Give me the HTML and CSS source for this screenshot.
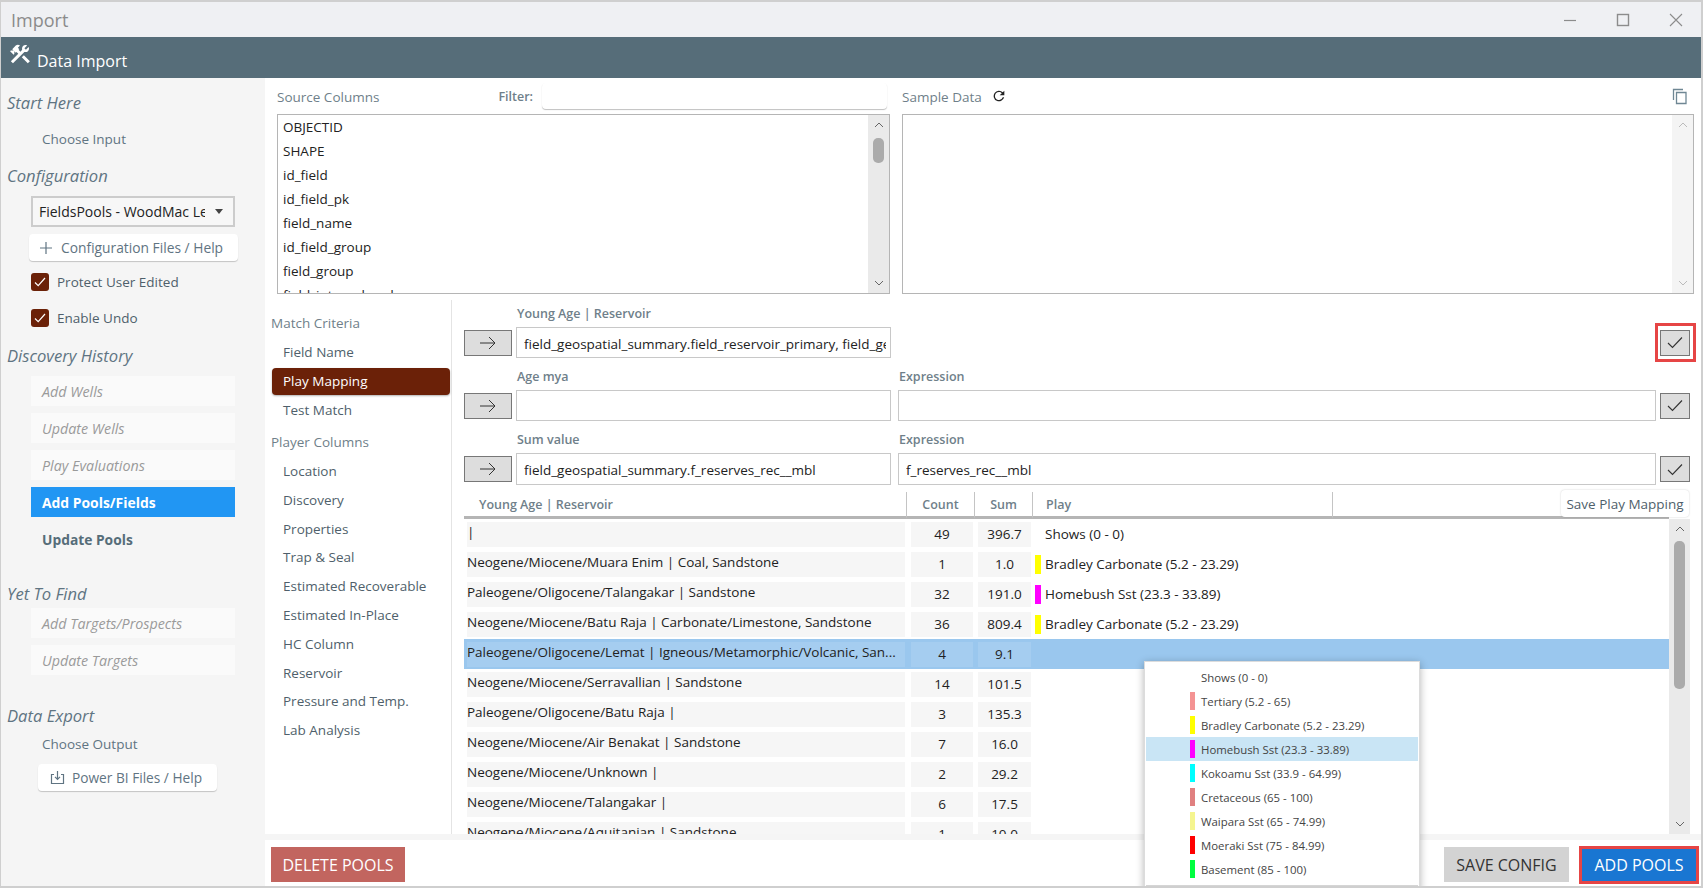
FILE: index.html
```html
<!DOCTYPE html>
<html lang="en">
<head>
<meta charset="utf-8">
<title>Import</title>
<link rel="stylesheet" href="styles.css">
</head>
<body>
<div class="window">
  <div class="titlebar">
    <span class="title">Import</span>
    <div class="winctl">
      <svg width="14" height="14" viewBox="0 0 14 14"><path d="M1 7.5h12" stroke="#8c8c8c" stroke-width="1.2"/></svg>
      <svg width="14" height="14" viewBox="0 0 14 14"><rect x="1.5" y="1.5" width="11" height="11" fill="none" stroke="#8c8c8c" stroke-width="1.4"/></svg>
      <svg width="14" height="14" viewBox="0 0 14 14"><path d="M1 1l12 12M13 1L1 13" stroke="#8c8c8c" stroke-width="1.1"/></svg>
    </div>
  </div>
  <div class="header">
    <svg class="tools" width="24" height="24" viewBox="0 0 24 24"><path fill="#fff" d="M13.78 15.3L19.78 21.3L21.89 19.14L15.89 13.14L13.78 15.3M17.5 10.1C17.11 10.1 16.69 10.05 16.36 9.91L4.97 21.25L2.86 19.14L10.27 11.74L8.5 9.96L7.78 10.66L6.33 9.25V12.11L5.63 12.81L2.11 9.25L2.81 8.55H5.62L4.22 7.14L7.78 3.58C8.95 2.41 10.83 2.41 12 3.58L9.89 5.74L11.3 7.14L10.59 7.85L12.38 9.63L14.2 7.75C14.06 7.42 14 7 14 6.63C14 4.66 15.56 3.11 17.5 3.11C18.09 3.11 18.61 3.25 19.08 3.53L16.41 6.2L17.91 7.7L20.58 5.03C20.86 5.5 21 6 21 6.63C21 8.55 19.45 10.1 17.5 10.1Z"/></svg>
    <span>Data Import</span>
  </div>
  <div class="body">
    <aside class="sidebar">
      <h3 class="sec sec-start">Start Here</h3>
      <div class="plain plain-input">Choose Input</div>
      <h3 class="sec sec-config">Configuration</h3>
      <div class="select"><span class="select-text">FieldsPools - WoodMac Legacy</span><i class="caret"></i></div>
      <div class="pill pill-config">
        <svg width="14" height="14" viewBox="0 0 14 14"><path d="M7 1v12M1 7h12" stroke="#5f7482" stroke-width="1.2"/></svg>
        <span>Configuration Files / Help</span>
      </div>
      <label class="check check-first"><span class="box"><svg width="14" height="14" viewBox="0 0 14 14"><path d="M2 7.5l3.2 3.2L12 3" fill="none" stroke="#fff" stroke-width="1.2"/></svg></span>Protect User Edited</label>
      <label class="check check-second"><span class="box"><svg width="14" height="14" viewBox="0 0 14 14"><path d="M2 7.5l3.2 3.2L12 3" fill="none" stroke="#fff" stroke-width="1.2"/></svg></span>Enable Undo</label>
      <h3 class="sec sec-history">Discovery History</h3>
      <div class="step off">Add Wells</div>
      <div class="step off">Update Wells</div>
      <div class="step off">Play Evaluations</div>
      <div class="step active">Add Pools/Fields</div>
      <div class="step bold">Update Pools</div>
      <h3 class="sec sec-find">Yet To Find</h3>
      <div class="step off">Add Targets/Prospects</div>
      <div class="step off">Update Targets</div>
      <h3 class="sec sec-export">Data Export</h3>
      <div class="plain plain-output">Choose Output</div>
      <div class="pill pill-power">
        <svg width="15" height="15" viewBox="0 0 15 15"><path d="M4 4.5H1.5v9h12v-9H11M7.5 1v8M5 6.8l2.5 2.5L10 6.8" fill="none" stroke="#5f7482" stroke-width="1.2"/></svg>
        <span>Power BI Files / Help</span>
      </div>
    </aside>
    <main class="main">
      <section class="top">
        <div class="source">
          <div class="source-head">
            <span class="cap">Source Columns</span>
            <span class="filter-label">Filter:</span>
            <div class="filter"></div>
          </div>
          <div class="listbox">
            <ul class="items">
              <li>OBJECTID</li><li>SHAPE</li><li>id_field</li><li>id_field_pk</li><li>field_name</li><li>id_field_group</li><li>field_group</li><li>field_internal_code</li>
            </ul>
            <div class="vbar">
              <svg class="chev" width="10" height="6" viewBox="0 0 10 6"><path d="M1 5l4-4 4 4" fill="none" stroke="#666" stroke-width="1"/></svg>
              <div class="thumb thumb-src"></div>
              <svg class="chev chev-end" width="10" height="6" viewBox="0 0 10 6"><path d="M1 1l4 4 4-4" fill="none" stroke="#666" stroke-width="1"/></svg>
            </div>
          </div>
        </div>
        <div class="sample">
          <div class="sample-head">
            <span class="cap">Sample Data</span>
            <svg class="refresh" width="16" height="16" viewBox="0 0 24 24"><path fill="#222" d="M17.65 6.35A8 8 0 1 0 19.73 14h-2.08A6 6 0 1 1 12 6c1.66 0 3.14.69 4.22 1.78L13 11h7V4z"/></svg>
            <svg class="copy" width="16" height="17" viewBox="0 0 16 17"><path d="M1.5 12V1.5H11M4.5 4.5h9.5v11H4.5z" fill="none" stroke="#6f8794" stroke-width="1.3"/></svg>
          </div>
          <div class="samplebox">
            <div class="vbar vbar-pale">
              <svg class="chev" width="10" height="6" viewBox="0 0 10 6"><path d="M1 5l4-4 4 4" fill="none" stroke="#bbb" stroke-width="1"/></svg>
              <svg class="chev chev-end" width="10" height="6" viewBox="0 0 10 6"><path d="M1 1l4 4 4-4" fill="none" stroke="#bbb" stroke-width="1"/></svg>
            </div>
          </div>
        </div>
      </section>
      <section class="mid">
        <nav class="subnav">
          <div class="navhead navhead-first">Match Criteria</div>
          <div class="navitem">Field Name</div>
          <div class="navitem current">Play Mapping</div>
          <div class="navitem">Test Match</div>
          <div class="navhead navhead-second">Player Columns</div>
          <div class="navitem">Location</div>
          <div class="navitem">Discovery</div>
          <div class="navitem">Properties</div>
          <div class="navitem">Trap &amp; Seal</div>
          <div class="navitem">Estimated Recoverable</div>
          <div class="navitem">Estimated In-Place</div>
          <div class="navitem">HC Column</div>
          <div class="navitem">Reservoir</div>
          <div class="navitem">Pressure and Temp.</div>
          <div class="navitem">Lab Analysis</div>
        </nav>
        <div class="mapping">
          <div class="labels labels-first"><span class="lab lab-a">Young Age | Reservoir</span></div>
          <div class="maprow">
            <button class="sq arrow"><svg width="18" height="14" viewBox="0 0 18 14"><path d="M1 7h15M10 1l6 6-6 6" fill="none" stroke="#333" stroke-width="1"/></svg></button>
            <div class="field field-a"><span class="clip">field_geospatial_summary.field_reservoir_primary, field_geospatial_summary.field_age</span></div>
            <div class="nofield"></div>
            <div class="hilite"><button class="sq tick"><svg width="16" height="13" viewBox="0 0 16 13"><path d="M1 7l4.5 4.5L15 1.5" fill="none" stroke="#333" stroke-width="1.1"/></svg></button></div>
          </div>
          <div class="labels"><span class="lab lab-a">Age mya</span><span class="lab">Expression</span></div>
          <div class="maprow">
            <button class="sq arrow"><svg width="18" height="14" viewBox="0 0 18 14"><path d="M1 7h15M10 1l6 6-6 6" fill="none" stroke="#333" stroke-width="1"/></svg></button>
            <div class="field field-a"></div>
            <div class="field field-b"></div>
            <button class="sq tick"><svg width="16" height="13" viewBox="0 0 16 13"><path d="M1 7l4.5 4.5L15 1.5" fill="none" stroke="#333" stroke-width="1.1"/></svg></button>
          </div>
          <div class="labels"><span class="lab lab-a">Sum value</span><span class="lab">Expression</span></div>
          <div class="maprow maprow-tall">
            <button class="sq arrow"><svg width="18" height="14" viewBox="0 0 18 14"><path d="M1 7h15M10 1l6 6-6 6" fill="none" stroke="#333" stroke-width="1"/></svg></button>
            <div class="field field-a"><span class="clip">field_geospatial_summary.f_reserves_rec__mbl</span></div>
            <div class="field field-b"><span class="clip">f_reserves_rec__mbl</span></div>
            <button class="sq tick"><svg width="16" height="13" viewBox="0 0 16 13"><path d="M1 7l4.5 4.5L15 1.5" fill="none" stroke="#333" stroke-width="1.1"/></svg></button>
          </div>
          <div class="thead">
            <div class="th th-name">Young Age | Reservoir</div>
            <div class="th th-count">Count</div>
            <div class="th th-sum">Sum</div>
            <div class="th th-play">Play</div>
            <div class="savemap">Save Play Mapping</div>
          </div>
          <div class="tbody">
            <div class="rows">
              <div class="row"><div class="c-name">|</div><div class="c-num">49</div><div class="c-sum">396.7</div><div class="c-play">Shows (0 - 0)</div></div>
              <div class="row"><div class="c-name">Neogene/Miocene/Muara Enim | Coal, Sandstone</div><div class="c-num">1</div><div class="c-sum">1.0</div><div class="c-play"><i class="sw sw-y"></i>Bradley Carbonate (5.2 - 23.29)</div></div>
              <div class="row"><div class="c-name">Paleogene/Oligocene/Talangakar | Sandstone</div><div class="c-num">32</div><div class="c-sum">191.0</div><div class="c-play"><i class="sw sw-m"></i>Homebush Sst (23.3 - 33.89)</div></div>
              <div class="row"><div class="c-name">Neogene/Miocene/Batu Raja | Carbonate/Limestone, Sandstone</div><div class="c-num">36</div><div class="c-sum">809.4</div><div class="c-play"><i class="sw sw-y"></i>Bradley Carbonate (5.2 - 23.29)</div></div>
              <div class="row selected"><div class="c-name">Paleogene/Oligocene/Lemat | Igneous/Metamorphic/Volcanic, San...</div><div class="c-num">4</div><div class="c-sum">9.1</div><div class="c-play"></div></div>
              <div class="row"><div class="c-name">Neogene/Miocene/Serravallian | Sandstone</div><div class="c-num">14</div><div class="c-sum">101.5</div><div class="c-play"></div></div>
              <div class="row"><div class="c-name">Paleogene/Oligocene/Batu Raja |</div><div class="c-num">3</div><div class="c-sum">135.3</div><div class="c-play"></div></div>
              <div class="row"><div class="c-name">Neogene/Miocene/Air Benakat | Sandstone</div><div class="c-num">7</div><div class="c-sum">16.0</div><div class="c-play"></div></div>
              <div class="row"><div class="c-name">Neogene/Miocene/Unknown |</div><div class="c-num">2</div><div class="c-sum">29.2</div><div class="c-play"></div></div>
              <div class="row"><div class="c-name">Neogene/Miocene/Talangakar |</div><div class="c-num">6</div><div class="c-sum">17.5</div><div class="c-play"></div></div>
              <div class="row"><div class="c-name">Neogene/Miocene/Aquitanian | Sandstone</div><div class="c-num">1</div><div class="c-sum">10.0</div><div class="c-play"></div></div>
            </div>
            <div class="vbar vbar-table">
              <svg class="chev" width="10" height="6" viewBox="0 0 10 6"><path d="M1 5l4-4 4 4" fill="none" stroke="#666" stroke-width="1"/></svg>
              <div class="thumb thumb-table"></div>
              <svg class="chev chev-end" width="10" height="6" viewBox="0 0 10 6"><path d="M1 1l4 4 4-4" fill="none" stroke="#666" stroke-width="1"/></svg>
            </div>
          </div>
        </div>
      </section>
      <footer class="footer">
        <button class="act delete">DELETE POOLS</button>
        <div class="spacer"></div>
        <button class="act save">SAVE CONFIG</button>
        <div class="addwrap"><button class="act add">ADD POOLS</button></div>
      </footer>
    </main>
  </div>
  <div class="menu">
    <div class="mi"><i class="msw"></i>Shows (0 - 0)</div>
    <div class="mi"><i class="msw m1"></i>Tertiary (5.2 - 65)</div>
    <div class="mi"><i class="msw m2"></i>Bradley Carbonate (5.2 - 23.29)</div>
    <div class="mi hot"><i class="msw m3"></i>Homebush Sst (23.3 - 33.89)</div>
    <div class="mi"><i class="msw m4"></i>Kokoamu Sst (33.9 - 64.99)</div>
    <div class="mi"><i class="msw m5"></i>Cretaceous (65 - 100)</div>
    <div class="mi"><i class="msw m6"></i>Waipara Sst (65 - 74.99)</div>
    <div class="mi"><i class="msw m7"></i>Moeraki Sst (75 - 84.99)</div>
    <div class="mi"><i class="msw m8"></i>Basement (85 - 100)</div>
    <div class="msep"></div>
  </div>
</div>
</body>
</html>
```
FILE: styles.css
```css
*, *::before, *::after { box-sizing: border-box; }
html, body { margin: 0; padding: 0; height: 100%; overflow: hidden; }
body { font-family: "Open Sans", "Noto Sans", sans-serif; font-size: 13.5px; color: #222; background: #fff; }
h3 { margin: 0; font-weight: 400; }
ul { list-style: none; margin: 0; padding: 0; }
button { font-family: inherit; cursor: default; }

.window { position: relative; width: 1703px; height: 888px; border: 2px solid #cfcfcf; border-left-width: 1px; border-right-width: 2px; display: flex; flex-direction: column; overflow: hidden; background: #fff; }
.titlebar { height: 35px; flex: none; background: #eff0f3; display: flex; align-items: center; justify-content: space-between; padding: 0 18px 0 10px; }
.title { font-size: 18px; color: #8b8b8b; }
.winctl { display: flex; gap: 39px; align-items: center; }
.header { height: 41px; flex: none; background: #566d79; color: #fff; display: flex; align-items: center; font-size: 16px; padding: 0 0 0 7px; gap: 5px; }
.tools { margin-top: -7px; }
.header span { padding-top: 7px; }
.body { flex: 1; min-height: 0; display: flex; }

.sidebar { width: 264px; flex: none; background: #f5f5f5; padding: 0 0 0 6px; color: #5f7482; }
.sec { font-style: italic; font-size: 16.6px; color: #5f7482; line-height: 24px; }
.sec-start { margin-top: 13px; }
.sec-config { margin-top: 15px; }
.sec-history { margin-top: 16px; }
.sec-find { margin-top: 21px; }
.sec-export { margin-top: 29px; }
.plain { font-size: 13.5px; line-height: 20px; padding-left: 35px; }
.plain-input { margin-top: 14px; }
.plain-output { margin-top: 6px; }
.select { width: 204px; height: 31px; margin: 8px 0 0 24px; border: 2px solid #ccc; background: #f7f7f7; display: flex; align-items: center; padding: 0 10px 0 6px; gap: 10px; color: #222; font-size: 14px; }
.select-text { flex: 1; overflow: hidden; white-space: nowrap; }
.caret { width: 0; height: 0; border-left: 4px solid transparent; border-right: 4px solid transparent; border-top: 5px solid #444; }
.pill { background: #fff; border-radius: 4px; box-shadow: 0 1px 1px rgba(0,0,0,.2); display: flex; align-items: center; color: #5f7482; }
.pill-config { width: 209px; height: 27px; margin: 7px 0 0 22px; padding-left: 10px; gap: 8px; font-size: 13.8px; }
.pill-power { width: 179px; height: 27px; margin: 10px 0 0 31px; padding-left: 12px; gap: 7px; font-size: 13.7px; }
.check { display: flex; align-items: center; gap: 8px; margin-left: 24px; height: 20px; color: #4f5f6b; font-size: 13.5px; }
.check-first { margin-top: 11px; }
.check-second { margin-top: 16px; }
.box { width: 18px; height: 18px; border-radius: 3px; background: #6b2108; display: flex; align-items: center; justify-content: center; }
.step { width: 204px; height: 30px; margin: 0 0 7px 24px; padding-left: 11px; display: flex; align-items: center; font-size: 14.3px; }
.sec-history + .step { margin-top: 8px; }
.sec-find + .step { margin-top: 2px; }
.off { background: #fafafa; font-style: italic; color: #9a9a9a; }
.active { background: #2196f3; color: #fff; font-weight: 700; font-size: 13.9px; }
.bold { font-weight: 700; color: #566d79; margin-bottom: 0; margin-top: -7px; height: 44px; font-size: 13.8px; }

.main { flex: 1; min-width: 0; display: flex; flex-direction: column; background: #fff; }
.top { height: 222px; flex: none; display: flex; padding: 5px 7px 0 12px; gap: 12px; }
.source { width: 613px; flex: none; }
.source-head { height: 26px; display: flex; align-items: center; }
.cap { color: #6f7f8a; font-size: 13.5px; padding-top: 2px; }
.filter-label { margin-left: 119px; font-size: 12.5px; font-weight: 600; color: #6f7f8a; }
.filter { margin-left: 9px; width: 345px; height: 26px; border-radius: 4px; box-shadow: 0 1px 1px rgba(0,0,0,.25); background: #fff; }
.listbox { margin-top: 5px; height: 180px; border: 1px solid #b5b5b5; display: flex; overflow: hidden; }
.items { flex: 1; padding: 0 0 0 5px; color: #222; font-size: 13.5px; }
.items li { height: 24px; line-height: 24px; white-space: nowrap; }
.vbar { background: #eaeaea; width: 21px; flex: none; display: flex; flex-direction: column; align-items: center; padding: 7px 0; position: relative; }
.chev { flex: none; }
.chev-end { margin-top: auto; }
.thumb { background: #ababab; border-radius: 5px; width: 11px; }
.thumb-src { height: 25px; margin-top: 10px; }
.vbar-pale { background: #f4f4f4; margin-left: auto; }
.sample { flex: 1; min-width: 0; display: flex; flex-direction: column; }
.sample-head { height: 26px; display: flex; align-items: center; }
.refresh { margin-left: 9px; }
.copy { margin-left: auto; margin-right: 6px; }
.samplebox { margin-top: 5px; height: 180px; border: 1px solid #b5b5b5; display: flex; }

.mid { flex: 1; min-height: 0; display: flex; }
.subnav { width: 187px; flex: none; border-right: 1px solid #e4e4e4; padding: 0 1px 0 6px; }
.navhead { color: #6f7f8a; height: 29px; display: flex; align-items: center; font-size: 13.5px; }
.navhead-first { margin-top: 8px; }
.navhead-first + .navitem { margin-top: 1px; }
.navhead-second { margin-top: 2px; height: 30px; }
.navitem { height: 28.8px; display: flex; align-items: center; margin-left: 1px; padding-left: 11px; color: #4f5f6b; font-size: 13.5px; border-radius: 4px; }
.current { background: #6b2108; color: #fff; height: 27px; margin: 1px 0 1px 1px; box-shadow: 0 1px 2px rgba(0,0,0,.3); }
.mapping { flex: 1; min-width: 0; padding-left: 12px; display: flex; flex-direction: column; }
.labels { height: 32px; padding-top: 4px; display: flex; align-items: center; font-size: 12.5px; font-weight: 600; color: #6f7f8a; flex: none; }
.labels-first { height: 27px; padding-top: 0; }
.lab-a { width: 435px; padding-left: 53px; }
.maprow { height: 31px; display: flex; align-items: center; flex: none; }
.maprow-tall { height: 32px; }
.sq { width: 48px; height: 26px; background: #ddd; border: 1px solid #777; padding: 0; display: flex; align-items: center; justify-content: center; flex: none; }
.field { height: 100%; border: 1px solid #c8c8c8; display: flex; align-items: center; padding: 2px 4px 0 7px; font-size: 13.5px; color: #222; flex: none; }
.clip { overflow: hidden; white-space: nowrap; }
.field-a { width: 375px; margin-left: 4px; }
.field-b { width: 758px; margin-left: 7px; }
.nofield { width: 765px; flex: none; }
.tick { width: 30px; margin-left: 4px; }
.hilite { position: relative; display: flex; }
.hilite::after { content: ""; position: absolute; left: -1px; top: -7px; width: 41px; height: 39px; border: 3px solid #e64545; pointer-events: none; }
.thead { height: 34px; flex: none; display: flex; align-items: flex-end; width: 1205px; position: relative; }
.th { height: 27px; border-bottom: 3px solid #b5b5b5; font-size: 12.5px; font-weight: 600; color: #6f7f8a; display: flex; align-items: center; border-right: 1px solid #c4c4c4; }
.th-name { width: 443px; padding-left: 15px; }
.th-count { width: 68px; justify-content: center; }
.th-sum { width: 58px; justify-content: center; }
.th-play { width: 300px; padding-left: 13px; }
.thead::after { content: ""; flex: 1; height: 3px; background: #b5b5b5; }
.savemap { position: absolute; right: -20px; bottom: 2px; width: 128px; height: 27px; background: #fff; border-radius: 4px; box-shadow: 0 0 2px rgba(0,0,0,.2); display: flex; align-items: center; justify-content: center; color: #4f5f6b; font-size: 13.5px; }
.tbody { flex: 1; min-height: 0; display: flex; margin-right: 11px; }
.rows { width: 1205px; flex: none; overflow: hidden; }
.row { height: 30px; display: flex; align-items: center; padding-left: 3px; color: #222; font-size: 13.5px; }
.c-name { width: 438px; height: 25px; background: #f6f6f6; padding: 0 0 5px 0; white-space: nowrap; overflow: hidden; display: flex; align-items: center; flex: none; }
.c-num { width: 62px; height: 25px; background: #f6f6f6; margin-left: 6px; display: flex; align-items: center; justify-content: center; flex: none; }
.c-sum { width: 53px; height: 25px; background: #f6f6f6; margin-left: 5px; display: flex; align-items: center; justify-content: center; flex: none; }
.c-play { margin-left: 4px; display: flex; align-items: center; gap: 4px; height: 25px; white-space: nowrap; padding-left: 10px; }
.c-play .sw { margin-left: -10px; }
.sw { width: 6px; height: 19px; display: block; }
.sw-y { background: #ffff00; }
.sw-m { background: #ff00ff; }
.selected { background: #9ac7ee; }
.selected .c-name, .selected .c-num, .selected .c-sum { background: #a5cdf0; }
.vbar-table { width: 21px; }
.thumb-table { height: 148px; margin-top: 9px; }

.footer { height: 52px; flex: none; background: #fff; border-top: 6px solid #f5f5f5; display: flex; align-items: center; padding: 3px 2px 0 6px; }
.spacer { flex: 1; }
.act { border: 0; height: 35px; font-size: 16px; padding: 0; }
.delete { width: 134px; background: #c2655f; color: #fff; }
.save { width: 125px; background: #d3d3d3; color: #333; margin-right: 10px; }
.addwrap { border: 3px solid #e64545; width: 120px; height: 38px; display: flex; }
.add { width: 100%; height: 32px; background: #1976d2; color: #fff; }

.menu { position: absolute; left: 1143px; top: 659px; width: 276px; height: 240px; background: #fff; border: 1px solid #dcdcdc; box-shadow: 0 2px 8px rgba(0,0,0,.3); padding: 3px 1px 0; }
.mi { height: 24px; display: flex; align-items: center; font-size: 11.4px; color: #444; padding-left: 44px; gap: 6px; }
.msw { width: 5px; height: 18px; display: block; flex: none; }
.m1 { background: #f49393; }
.m2 { background: #ffff00; }
.m3 { background: #ff00ff; }
.m4 { background: #00ffff; }
.m5 { background: #e08080; }
.m6 { background: #f5f58f; }
.m7 { background: #ff0000; }
.m8 { background: #00ff40; }
.hot { background: #c9e5f5; }
.msep { height: 1px; background: #d5d5d5; margin-top: 4px; }
```
